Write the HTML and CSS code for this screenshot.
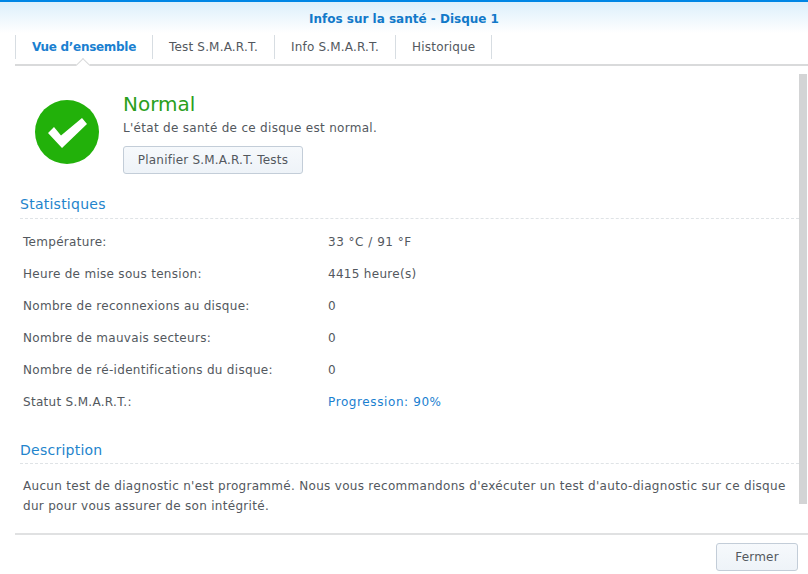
FILE: index.html
```html
<!DOCTYPE html>
<html lang="fr">
<head>
<meta charset="utf-8">
<title>Infos sur la santé - Disque 1</title>
<link rel="stylesheet" href="styles.css">
</head>
<body>
<div class="window">
  <header class="titlebar">Infos sur la santé - Disque 1</header>
  <nav class="tabs">
    <a class="tab active">Vue d’ensemble</a>
    <a class="tab">Test S.M.A.R.T.</a>
    <a class="tab">Info S.M.A.R.T.</a>
    <a class="tab">Historique</a>
  </nav>
  <main class="content">
    <div class="scroll">
      <section class="status">
        <svg class="status-icon" width="64" height="64" viewBox="0 0 64 64" aria-hidden="true">
          <circle cx="32" cy="32" r="32" fill="#22b10a"/>
          <polygon points="13,33 19,27 26,35.5 47,18 52,24 27,48" fill="#fff"/>
        </svg>
        <div class="status-body">
          <div class="status-title">Normal</div>
          <div class="status-text">L'état de santé de ce disque est normal.</div>
          <button class="btn plan">Planifier S.M.A.R.T. Tests</button>
        </div>
      </section>
      <h2 class="section-title stats-title">Statistiques</h2>
      <dl class="stats">
        <div class="row"><dt>Température:</dt><dd class="temp">33 °C / 91 °F</dd></div>
        <div class="row"><dt>Heure de mise sous tension:</dt><dd>4415 heure(s)</dd></div>
        <div class="row"><dt>Nombre de reconnexions au disque:</dt><dd>0</dd></div>
        <div class="row"><dt>Nombre de mauvais secteurs:</dt><dd>0</dd></div>
        <div class="row"><dt>Nombre de ré-identifications du disque:</dt><dd>0</dd></div>
        <div class="row"><dt>Statut S.M.A.R.T.:</dt><dd class="link">Progression: 90%</dd></div>
      </dl>
      <h2 class="section-title desc-title">Description</h2>
      <p class="desc">Aucun test de diagnostic n'est programmé. Nous vous recommandons d'exécuter un test d'auto-diagnostic sur ce disque dur pour vous assurer de son intégrité.</p>
    </div>
    <div class="scrollbar"></div>
  </main>
  <footer class="footer"><button class="btn close">Fermer</button></footer>
</div>
</body>
</html>
```
FILE: styles.css
```css
* { box-sizing: border-box; }
html, body { margin: 0; padding: 0; background: #fff; }
body { width: 808px; height: 574px; overflow: hidden; font-family: "DejaVu Sans", Verdana, sans-serif; font-size: 12px; letter-spacing: 0.3px; color: #53585e; }
.window { display: flex; flex-direction: column; height: 574px; }
.titlebar { height: 33px; border-top: 2px solid #0086e5; background: linear-gradient(#dceffb, #ffffff); text-align: center; color: #1279c9; font-weight: bold; letter-spacing: 0; line-height: 34px; }
.tabs { display: flex; margin: 2px 0 0 15px; height: 31px; border-bottom: 2px solid #d9dadb; }
.tab { height: 24px; line-height: 24px; padding: 0 16px; border-right: 1px solid #d7dde2; white-space: nowrap; letter-spacing: 0.18px; }
.tab:first-child { border-left: 1px solid #d7dde2; }
.tab.active { color: #1a80d0; font-weight: bold; letter-spacing: -0.3px; position: relative; }
.tab.active::after { content: ""; position: absolute; left: 62px; top: 25px; width: 9px; height: 9px; background: #fff; border-top: 1px solid #d9dadb; border-left: 1px solid #d9dadb; transform: rotate(45deg); }
.content { flex: 1; display: flex; min-height: 0; }
.scroll { flex: 1; min-width: 0; padding: 0 8px 0 20px; }
.scrollbar { width: 8px; margin: 8px 1px 0 0; height: 430px; background: #d3d4d5; }
.status { display: flex; padding: 27px 0 0 15px; height: 128px; }
.status-icon { margin-top: 7px; flex: none; }
.status-body { margin-left: 24px; }
.status-title { font-size: 20px; line-height: 23px; letter-spacing: 0; color: #2aa01c; }
.status-text { line-height: 24px; height: 24px; }
.btn { font: inherit; letter-spacing: 0.2px; color: #53585e; border: 1px solid #c3cdd8; border-radius: 3px; background: linear-gradient(#f6f9fc, #eef3f8); padding: 0; height: 28px; }
.plan { width: 180px; margin-top: 6px; }
.section-title { margin: 0; font-weight: normal; font-size: 14px; letter-spacing: 0.25px; color: #2384cc; line-height: 20px; }
.stats-title { padding-bottom: 4px; border-bottom: 1px dashed #dfe3e6; margin-right: -8px; }
.stats { margin: 0 0 0 3px; padding-top: 7px; }
.row { display: flex; height: 32px; line-height: 32px; }
dt { width: 305px; }
dd { margin: 0; }
.temp { letter-spacing: 0.5px; }
.link { color: #1a80d0; letter-spacing: 0.6px; }
.desc-title { margin-top: 22px; padding-bottom: 3px; border-bottom: 1px dashed #dfe3e6; margin-right: -8px; }
.desc { margin: 12px 0 0 3px; line-height: 20px; }
.footer { height: 41px; margin-left: 15px; border-top: 2px solid #e0e1e2; display: flex; justify-content: flex-end; padding: 8px 10px 0 0; }
.close { width: 82px; }
```
